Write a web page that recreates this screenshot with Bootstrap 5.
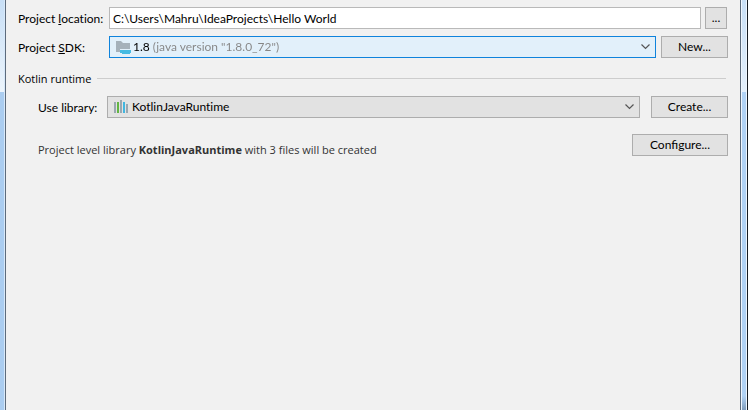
<!DOCTYPE html>
<html lang="en">
<head>
<meta charset="utf-8">
<meta name="viewport" content="width=device-width, initial-scale=1">
<title>New Project</title>
<link href="https://cdn.jsdelivr.net/npm/bootstrap@5.3.0/dist/css/bootstrap.min.css" rel="stylesheet">
<style>
body { font-family: Lato, "Open Sans", sans-serif; font-size: 12px; line-height: 16px; font-variant-ligatures: none; color: #000; background: #f1f1f1; }
.edge { flex: none; }
.edge-left { width: 6px; border-right: 1px solid #5d6b7c; background: linear-gradient(#c8dff6, #edf5fc 92px, #abcdf0 92px, #abcdf0); }
.edge-left::after { content: ""; display: block; width: 1px; height: 100%; margin-left: auto; background: #d8e9fa; }
.edge-right { width: 8px; border-left: 1px solid #5d6b7c; border-right: 1px solid #151b22; background: #eef6fe; padding: 0 1px; }
.edge-right::after { content: ""; display: block; height: 100%; background: linear-gradient(#c8dff6, #e3effb 92px, #b0d2f5 92px, #b0d2f5 calc(100% - 14px), #7f9cbb); }
.dialog-pane { background: #f1f1f1; padding: 7px 12px; }
.field-label { width: 91px; flex: none; padding-top: 2px; }
.lib-label { width: 69px; flex: none; padding-top: 2px; }
.tool-btn { height: 22px; padding: 0; border: 1px solid #adadad; border-radius: 0; background: #e2e2e2; color: #000; font-size: 12px; line-height: 20px; flex: none; }
.tool-btn:hover { background: #e5f1fb; border-color: #0078d7; }
.w-browse { width: 22px; margin-right: 1px; }
.w-new { width: 67px; }
.w-create { width: 77px; }
.w-configure { width: 96px; }
.path-box { height: 22px; min-height: 0; padding: 0 3px; border: 1px solid #b9b9b9; border-radius: 0; font-size: 12px; line-height: 20px; color: #000; font-variant-ligatures: none; }
.combo { height: 22px; border: 1px solid #adadad; background: #e2e2e2; }
.combo-focus { border-color: #0f83dc; background: #e2f0fa; }
.combo select { appearance: none; border: 0; padding: 0; background: transparent; color: #000; font-size: 12px; line-height: 18px; height: 20px; outline: 0; min-width: 0; font-variant-ligatures: none; }
/* version number in black, description in grey */
.combo-focus select { color: transparent; background: linear-gradient(90deg, #000 18px, #858585 18px); -webkit-background-clip: text; background-clip: text; }
.combo-focus option { color: #000; }
.combo svg { flex: none; }
.rule { height: 1px; background: #cdcdcd; margin-right: 2px; }
.sdk-row { margin-top: 7px; }
.sdk-row .combo { margin-right: 5px; }
.icon-sdk { margin: 0 1px 0 6px; }
.chev { margin: 0 5px; }
.section-row { margin-top: 12px; height: 16px; }
.section-title { width: 79px; padding-top: 2px; }
.section-title, .note { font-family: "Open Sans", sans-serif; font-size: 11px; }
.lib-row { margin-top: 10px; padding-left: 20px; }
.lib-row .combo { margin-right: 11px; }
.icon-lib { margin: 0 4px 0 6px; }
.note-row { margin-top: 16px; padding-left: 20px; }
.note { color: #333; padding-top: 8px; }
</style>
<script src="https://cdn.jsdelivr.net/npm/bootstrap@5.3.0/dist/js/bootstrap.bundle.min.js"></script>
</head>
<body>
<div class="d-flex vh-100 overflow-hidden">
  <div class="edge edge-left"></div>
  <main class="dialog-pane flex-grow-1">
    <form>
      <div class="d-flex align-items-center">
        <label class="field-label" for="location">Project <u>l</u>ocation:</label>
        <input class="form-control path-box flex-grow-1 me-1" id="location" type="text" value="C:\Users\Mahru\IdeaProjects\Hello World">
        <button class="btn tool-btn w-browse" type="button" aria-label="Browse">...</button>
      </div>
      <div class="d-flex align-items-center sdk-row">
        <label class="field-label" for="sdk">Project <u>S</u>DK:</label>
        <div class="combo combo-focus d-flex align-items-center flex-grow-1">
          <svg class="icon-sdk" width="16" height="16" viewBox="0 0 16 16" aria-hidden="true"><path fill="#a5b1ba" d="M0 2h5l2 2h7v6H4v3H0z"/><path fill="#46bbe2" d="M4 11h11v3h-1v1H6v-1H4z"/></svg>
          <select class="flex-grow-1" id="sdk"><option>1.8 (java version "1.8.0_72")</option></select>
          <svg class="chev" width="9" height="6" viewBox="0 0 9 6" aria-hidden="true"><path d="M.5.5l4 4 4-4" fill="none" stroke="#555" stroke-width="1.2"/></svg>
        </div>
        <button class="btn tool-btn w-new" type="button">New...</button>
      </div>
      <div class="d-flex align-items-center section-row">
        <span class="section-title">Kotlin runtime</span>
        <div class="rule flex-grow-1"></div>
      </div>
      <div class="d-flex align-items-center lib-row">
        <label class="lib-label" for="library">Use library:</label>
        <div class="combo d-flex align-items-center flex-grow-1">
          <svg class="icon-lib" width="14" height="14" viewBox="0 0 14 14" aria-hidden="true"><path fill="#9aa7b0" d="M0 2h2v11H0zM6 0h2v13H6zM12 4h2v9h-2z"/><path fill="#62b543" d="M3 2h2v11H3z"/><path fill="#40b6e0" d="M9 2h2v11H9z"/></svg>
          <select class="flex-grow-1" id="library"><option>KotlinJavaRuntime</option></select>
          <svg class="chev" width="9" height="6" viewBox="0 0 9 6" aria-hidden="true"><path d="M.5.5l4 4 4-4" fill="none" stroke="#555" stroke-width="1.2"/></svg>
        </div>
        <button class="btn tool-btn w-create" type="button">Create...</button>
      </div>
      <div class="d-flex justify-content-between note-row">
        <div class="note">Project level library <b>KotlinJavaRuntime</b> with 3 files will be created</div>
        <button class="btn tool-btn w-configure" type="button">Configure...</button>
      </div>
    </form>
  </main>
  <div class="edge edge-right"></div>
</div>
</body>
</html>
